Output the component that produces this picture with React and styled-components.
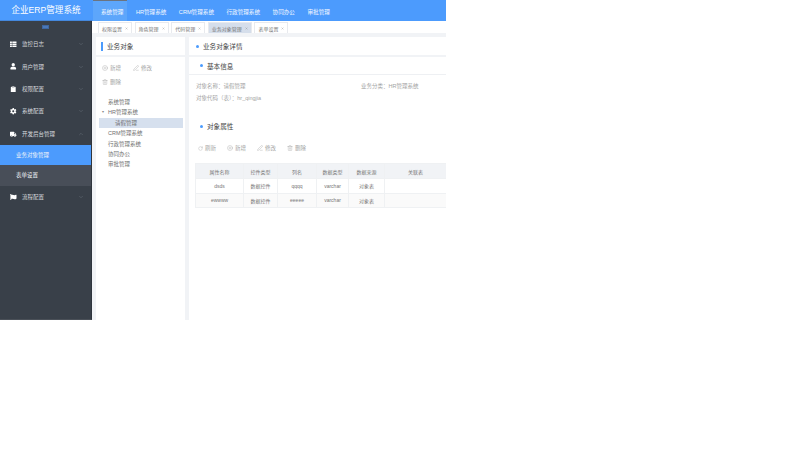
import React from 'react'
import styled, { createGlobalStyle } from 'styled-components'
import { ChevronDown, ChevronUp, PlusCircle, PenLine, Trash2, RotateCw, X } from 'lucide-react'
import { FaThList, FaUser, FaClipboard, FaCog, FaTruck, FaFlag } from 'react-icons/fa'

const Global = createGlobalStyle`
  html, body { margin: 0; padding: 0; background: #fff; }
  * { box-sizing: border-box; }
  body { font-family: "Liberation Sans", "Noto Sans CJK SC", sans-serif; }
`

const Page = styled.div`
  width: 446px;
  height: 320px;
  display: grid;
  grid-template-columns: 92px 1fr;
  grid-template-rows: 21px 1fr;
  overflow: hidden;
  background: #f1f3f6;
`

const Logo = styled.div`
  background: #4c9bfd;
  color: #fff;
  font-size: 8.6px;
  line-height: 21px;
  text-align: center;
  border-bottom: 1px solid #4488dd;
`

const TopNav = styled.div`
  background: #4c9bfd;
  display: flex;
  gap: 12.5px;
  padding-left: 1px;
`

const TopItem = styled.div`
  padding: ${(p) => (p.$active ? '0 4px 0 8px' : 0)};
  margin-right: ${(p) => (p.$active ? '-4px' : 0)};
  font-size: 5.6px;
  line-height: 22px;
  color: #f4f8ff;
  background: ${(p) => (p.$active ? '#5da6fb' : 'transparent')};
  border-top: ${(p) => (p.$active ? '1px solid #6b7480' : '1px solid transparent')};
`

const Side = styled.div`
  background: #394049;
  color: #d8dbdf;
  display: flex;
  flex-direction: column;
  border-right: 1px solid #2f353d;
  border-bottom: 1px solid #4a5058;
`

const Collapse = styled.div`
  height: 12px;
  display: flex;
  justify-content: center;
  align-items: center;
`

const CollapseMark = styled.span`
  width: 7px;
  height: 4px;
  background: #4a78b8;
  border: 1px solid #3d66a0;
`

const MenuItem = styled.div`
  height: 22.4px;
  display: flex;
  align-items: center;
  padding: 0 7px 0 10px;
  gap: 5.5px;
  font-size: 5.5px;
  svg:last-child { margin-left: auto; color: #666e78; }
`

const SubItem = styled.div`
  height: 20.5px;
  padding-left: 16px;
  font-size: 5.5px;
  line-height: 20.5px;
  color: #f2f5f9;
  background: ${(p) => (p.$active ? '#4c9bfd' : '#484e58')};
`

const Main = styled.div`
  display: flex;
  flex-direction: column;
  min-width: 0;
`

const TabBar = styled.div`
  height: 12px;
  background: #fff;
  display: flex;
  align-items: flex-end;
  padding-left: 6px;
  gap: 2.6px;
  flex-shrink: 0;
`

const Tab = styled.div`
  height: 11px;
  padding: 0 3px;
  display: flex;
  align-items: center;
  gap: 3px;
  font-size: 5px;
  color: #777;
  border: 1px solid #e8eaee;
  border-bottom: 0;
  background: ${(p) => (p.$active ? '#d5deeb' : '#fff')};
`

const Panels = styled.div`
  flex: 1;
  display: grid;
  grid-template-columns: 89px 1fr;
  gap: 4px;
  padding: 4px 0 0 4px;
  min-height: 0;
`

const Panel = styled.div`
  display: flex;
  flex-direction: column;
  gap: 2px;
  min-width: 0;
`

const Card = styled.div`
  background: #fff;
  flex: ${(p) => (p.$grow ? 1 : 'none')};
  padding: ${(p) => p.$pad || 0};
`

const TreeTitle = styled.div`
  height: 18px;
  display: flex;
  align-items: center;
  padding-left: 5px;
  gap: 4px;
  font-size: 6.6px;
  color: #444;
  &::before {
    content: '';
    width: 2px;
    height: 9px;
    background: #4c9bfd;
  }
`

const ToolRow = styled.div`
  display: flex;
  gap: ${(p) => p.$gap}px;
  font-size: 5.5px;
  color: #a3a3a3;
  margin: ${(p) => p.$margin || 0};
`

const Tool = styled.span`
  display: inline-flex;
  align-items: center;
  gap: 2px;
  line-height: 8px;
`

const Tree = styled.div`
  margin: 11px 2px 0 -3px;
  font-size: 5.5px;
  color: #707070;
`

const TreeNode = styled.div`
  height: 10.4px;
  line-height: 10.4px;
  padding-left: ${(p) => p.$indent}px;
  background: ${(p) => (p.$active ? '#d6e0ee' : 'transparent')};
  position: relative;
`

const Arrow = styled.span`
  position: absolute;
  left: 3px;
  top: 0;
  font-size: 4px;
  color: #888;
`

const Heading = styled.div`
  height: ${(p) => p.$h || 18}px;
  display: flex;
  align-items: center;
  gap: 4px;
  padding-left: ${(p) => p.$left || 7}px;
  margin-top: ${(p) => p.$mt || 0}px;
  font-size: 6.6px;
  color: #444;
  border-bottom: ${(p) => (p.$line ? '1px solid #eef0f3' : 0)};
  &::before {
    content: '';
    width: 3px;
    height: 3px;
    border-radius: 50%;
    background: #4c9bfd;
  }
`

const InfoGrid = styled.div`
  display: grid;
  grid-template-columns: 165px 1fr;
  row-gap: 4px;
  padding: 7px 0 0 7px;
  font-size: 5.5px;
  line-height: 8px;
  color: #a3a3a3;
`

const Table = styled.table`
  border-collapse: collapse;
  table-layout: fixed;
  width: 251px;
  margin: 11px 0 0 6px;
  font-size: 5px;
  color: #777;
  th, td {
    border: 1px solid #eff1f3;
    text-align: center;
    font-weight: normal;
    padding: 0;
  }
  th { background: #f1f3f6; height: 15px; }
  td { height: 14.5px; }
  tr:nth-child(2) td { background: #fafafa; }
`

const menus = [
  [FaThList, '监控日志'],
  [FaUser, '用户管理'],
  [FaClipboard, '权限配置'],
  [FaCog, '系统配置'],
]

const tabs = ['权限设置', '角色管理', '代码管理', '业务对象管理', '表单设置']
const tops = ['HR管理系统', 'CRM管理系统', '行政管理系统', '协同办公', '审批管理']
const cols = [
  ['属性名称', 48], ['控件类型', 34], ['列名', 39], ['数据类型', 32], ['数据来源', 36], ['关联表', 62],
]
const rows = [
  ['dsds', '数据控件', 'qqqq', 'varchar', '对象表', ''],
  ['ewwww', '数据控件', 'eeeee', 'varchar', '对象表', ''],
]

export default function App() {
  return (
    <Page>
      <Global />
      <Logo>企业ERP管理系统</Logo>
      <TopNav>
        <TopItem $active>系统管理</TopItem>
        {tops.map((t) => <TopItem key={t}>{t}</TopItem>)}
      </TopNav>
      <Side>
        <Collapse><CollapseMark /></Collapse>
        {menus.map(([Icon, label]) => (
          <MenuItem key={label}>
            <Icon size={6.5} color="#fff" />
            {label}
            <ChevronDown size={6} />
          </MenuItem>
        ))}
        <MenuItem>
          <FaTruck size={6.5} color="#fff" />
          开发后台管理
          <ChevronUp size={6} />
        </MenuItem>
        <SubItem $active>业务对象管理</SubItem>
        <SubItem>表单设置</SubItem>
        <MenuItem>
          <FaFlag size={6.5} color="#fff" />
          流程配置
          <ChevronDown size={6} />
        </MenuItem>
      </Side>
      <Main>
        <TabBar>
          {tabs.map((t, i) => (
            <Tab key={t} $active={i === 3}>{t}<X size={3} /></Tab>
          ))}
        </TabBar>
        <Panels>
          <Panel>
            <Card><TreeTitle>业务对象</TreeTitle></Card>
            <Card $grow $pad="7px 0 0 6px">
              <ToolRow $gap={12}>
                <Tool><PlusCircle size={6} strokeWidth={1.5} />新增</Tool>
                <Tool><PenLine size={6} strokeWidth={1.5} />修改</Tool>
              </ToolRow>
              <ToolRow $gap={12} $margin="6px 0 0">
                <Tool><Trash2 size={6} strokeWidth={1.5} />删除</Tool>
              </ToolRow>
              <Tree>
                <TreeNode $indent={9}>系统管理</TreeNode>
                <TreeNode $indent={9}><Arrow>▾</Arrow>HR管理系统</TreeNode>
                <TreeNode $indent={16} $active>请假管理</TreeNode>
                <TreeNode $indent={9}>CRM管理系统</TreeNode>
                <TreeNode $indent={9}>行政管理系统</TreeNode>
                <TreeNode $indent={9}>协同办公</TreeNode>
                <TreeNode $indent={9}>审批管理</TreeNode>
              </Tree>
            </Card>
          </Panel>
          <Panel>
            <Card><Heading>业务对象详情</Heading></Card>
            <Card $grow>
              <Heading $left={11} $line>基本信息</Heading>
              <InfoGrid>
                <span>对象名称：请假管理</span>
                <span>业务分类：HR管理系统</span>
                <span>对象代码（表）：hr_qingjia</span>
              </InfoGrid>
              <Heading $left={11} $mt={15}>对象属性</Heading>
              <ToolRow $gap={11} $margin="9px 0 0 9px">
                <Tool><RotateCw size={5} strokeWidth={1.5} />刷新</Tool>
                <Tool><PlusCircle size={6} strokeWidth={1.5} />新增</Tool>
                <Tool><PenLine size={6} strokeWidth={1.5} />修改</Tool>
                <Tool><Trash2 size={6} strokeWidth={1.5} />删除</Tool>
              </ToolRow>
              <Table>
                <colgroup>{cols.map(([c, w]) => <col key={c} width={w} />)}</colgroup>
                <thead><tr>{cols.map(([c]) => <th key={c}>{c}</th>)}</tr></thead>
                <tbody>
                  {rows.map((r) => (
                    <tr key={r[0]}>{r.map((v, i) => <td key={i}>{v}</td>)}</tr>
                  ))}
                </tbody>
              </Table>
            </Card>
          </Panel>
        </Panels>
      </Main>
    </Page>
  )
}
